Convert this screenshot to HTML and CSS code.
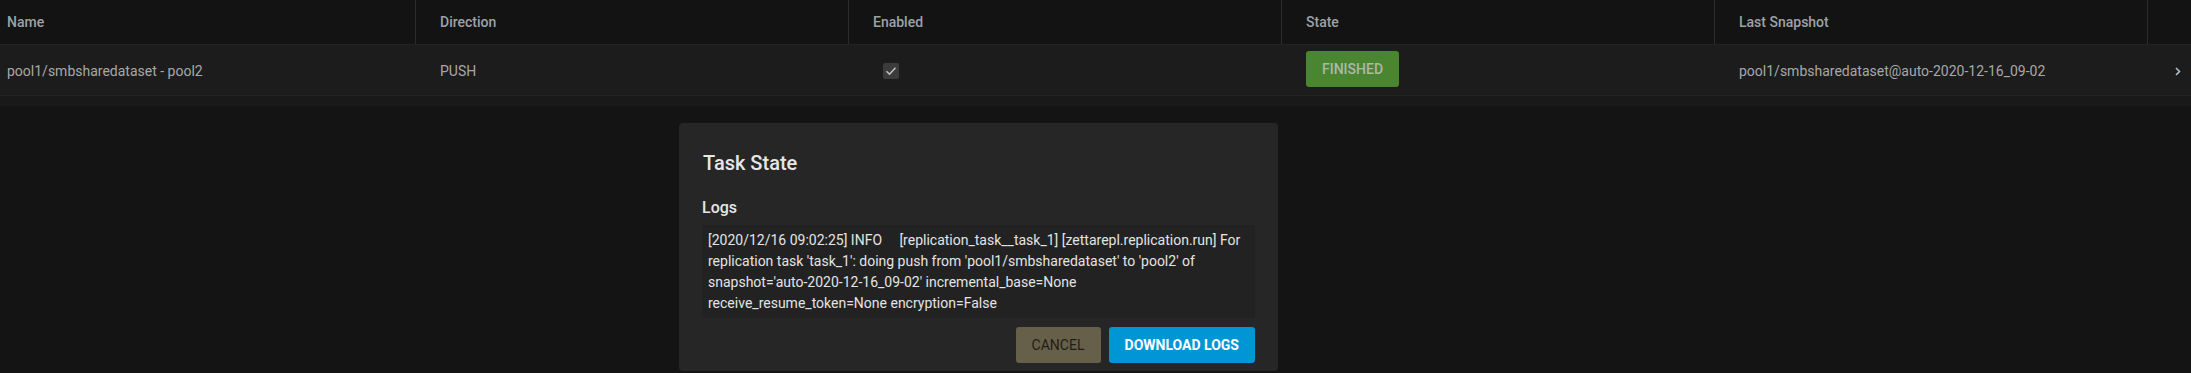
FILE: index.html
```html
<!DOCTYPE html>
<html>
<head>
<meta charset="utf-8">
<link rel="stylesheet" href="styles.css">
</head>
<body>
<div class="table">
  <div class="thead">
    <div class="cell first">Name</div>
    <div class="cell">Direction</div>
    <div class="cell">Enabled</div>
    <div class="cell">State</div>
    <div class="cell">Last Snapshot</div>
    <div class="cell last"></div>
  </div>
  <div class="trow">
    <div class="cell first">pool1/smbsharedataset - pool2</div>
    <div class="cell">PUSH</div>
    <div class="cell"><span class="check"><svg width="16" height="16" viewBox="0 0 16 16"><path d="M3.5 8.3 L6.5 11.2 L12.5 4.8" fill="none" stroke="#c4c4c4" stroke-width="1.5"/></svg></span></div>
    <div class="cell"><span class="badge">FINISHED</span></div>
    <div class="cell">pool1/smbsharedataset@auto-2020-12-16_09-02</div>
    <div class="cell last"><svg width="6" height="9" viewBox="0 0 6 9"><path d="M1 1 L4.5 4.5 L1 8" fill="none" stroke="#b4bcc8" stroke-width="1.6"/></svg></div>
  </div>
  <div class="band"></div>
</div>

<div class="dialog">
  <h2 class="title">Task State</h2>
  <div class="label">Logs</div>
  <div class="logbox">[2020/12/16 09:02:25] INFO     [replication_task__task_1] [zettarepl.replication.run] For replication task 'task_1': doing push from 'pool1/smbsharedataset' to 'pool2' of snapshot='auto-2020-12-16_09-02' incremental_base=None receive_resume_token=None encryption=False</div>
  <div class="actions">
    <button class="btn cancel">CANCEL</button>
    <button class="btn download">DOWNLOAD LOGS</button>
  </div>
</div>
</body>
</html>
```

FILE: styles.css
```css
html, body {
  margin: 0;
  padding: 0;
  background: #141414;
  font-family: Roboto, "Liberation Sans", sans-serif;
  width: 2191px;
  height: 373px;
  overflow: hidden;
  position: relative;
}

.table {
  display: flex;
  flex-direction: column;
}

.thead, .trow {
  display: flex;
}

.thead {
  height: 45px;
  background: #131313;
  border-bottom: 1px solid #232323;
  box-sizing: border-box;
}

.thead .cell {
  color: #9da2a7;
  font-weight: 500;
  font-size: 14px;
  border-right: 1px solid #2c2c2c;
}

.cell {
  width: 433px;
  box-sizing: border-box;
  padding-left: 24px;
  display: flex;
  align-items: center;
  flex-shrink: 0;
}

.cell.first {
  width: 416px;
  padding-left: 7px;
}

.cell.last {
  width: 45px;
  border-right: none !important;
  padding-left: 27px;
}

.trow {
  height: 51px;
  background: #1c1c1c;
  border-bottom: 1px solid #242424;
  box-sizing: border-box;
}

.trow .cell {
  color: #a8a8a8;
  font-size: 14px;
  padding-top: 2px;
}

.check {
  width: 16px;
  height: 16px;
  background: #3b3b3b;
  border-radius: 2px;
  margin-left: 10px;
  display: flex;
}

.badge {
  background: #4a8530;
  color: #aeb8aa;
  font-size: 14px;
  font-weight: 500;
  height: 36px;
  width: 93px;
  border-radius: 3px;
  display: flex;
  align-items: center;
  justify-content: center;
  box-sizing: border-box;
  margin-top: -4px;
}

.band {
  height: 10px;
  background: #191919;
}

.dialog {
  position: absolute;
  left: 679px;
  top: 123px;
  width: 599px;
  height: 248px;
  box-sizing: border-box;
  background: #262626;
  border-radius: 4px;
  padding: 24px 23px 8px 24px;
  display: flex;
  flex-direction: column;
}

.title {
  margin: 0;
  font-size: 20px;
  font-weight: 500;
  color: #e6e6e6;
  line-height: 28px;
  height: 28px;
  margin-top: 2px;
}

.label {
  margin-top: 22px;
  font-size: 16px;
  font-weight: 500;
  color: #e6e6e6;
  line-height: 18px;
  margin-left: -1px;
}

.logbox {
  margin-top: 8px;
  margin-left: -1px;
  background: #222222;
  color: #e4e4e4;
  font-size: 14px;
  line-height: 21px;
  padding: 5px 14px 5px 6px;
  white-space: pre-wrap;
  height: 93px;
  box-sizing: border-box;
  flex-shrink: 0;
}

.actions {
  display: flex;
  justify-content: flex-end;
  gap: 8px;
  margin-top: 9px;
}

.btn {
  font-family: Roboto, "Liberation Sans", sans-serif;
  font-size: 14px;
  height: 36px;
  border: none;
  border-radius: 3px;
  padding: 0 16px;
  white-space: nowrap;
}

.cancel {
  background: #66604a;
  color: #1f1d18;
  width: 85px;
}

.download {
  background: #0096d6;
  color: #ffffff;
  font-weight: 700;
}
```
